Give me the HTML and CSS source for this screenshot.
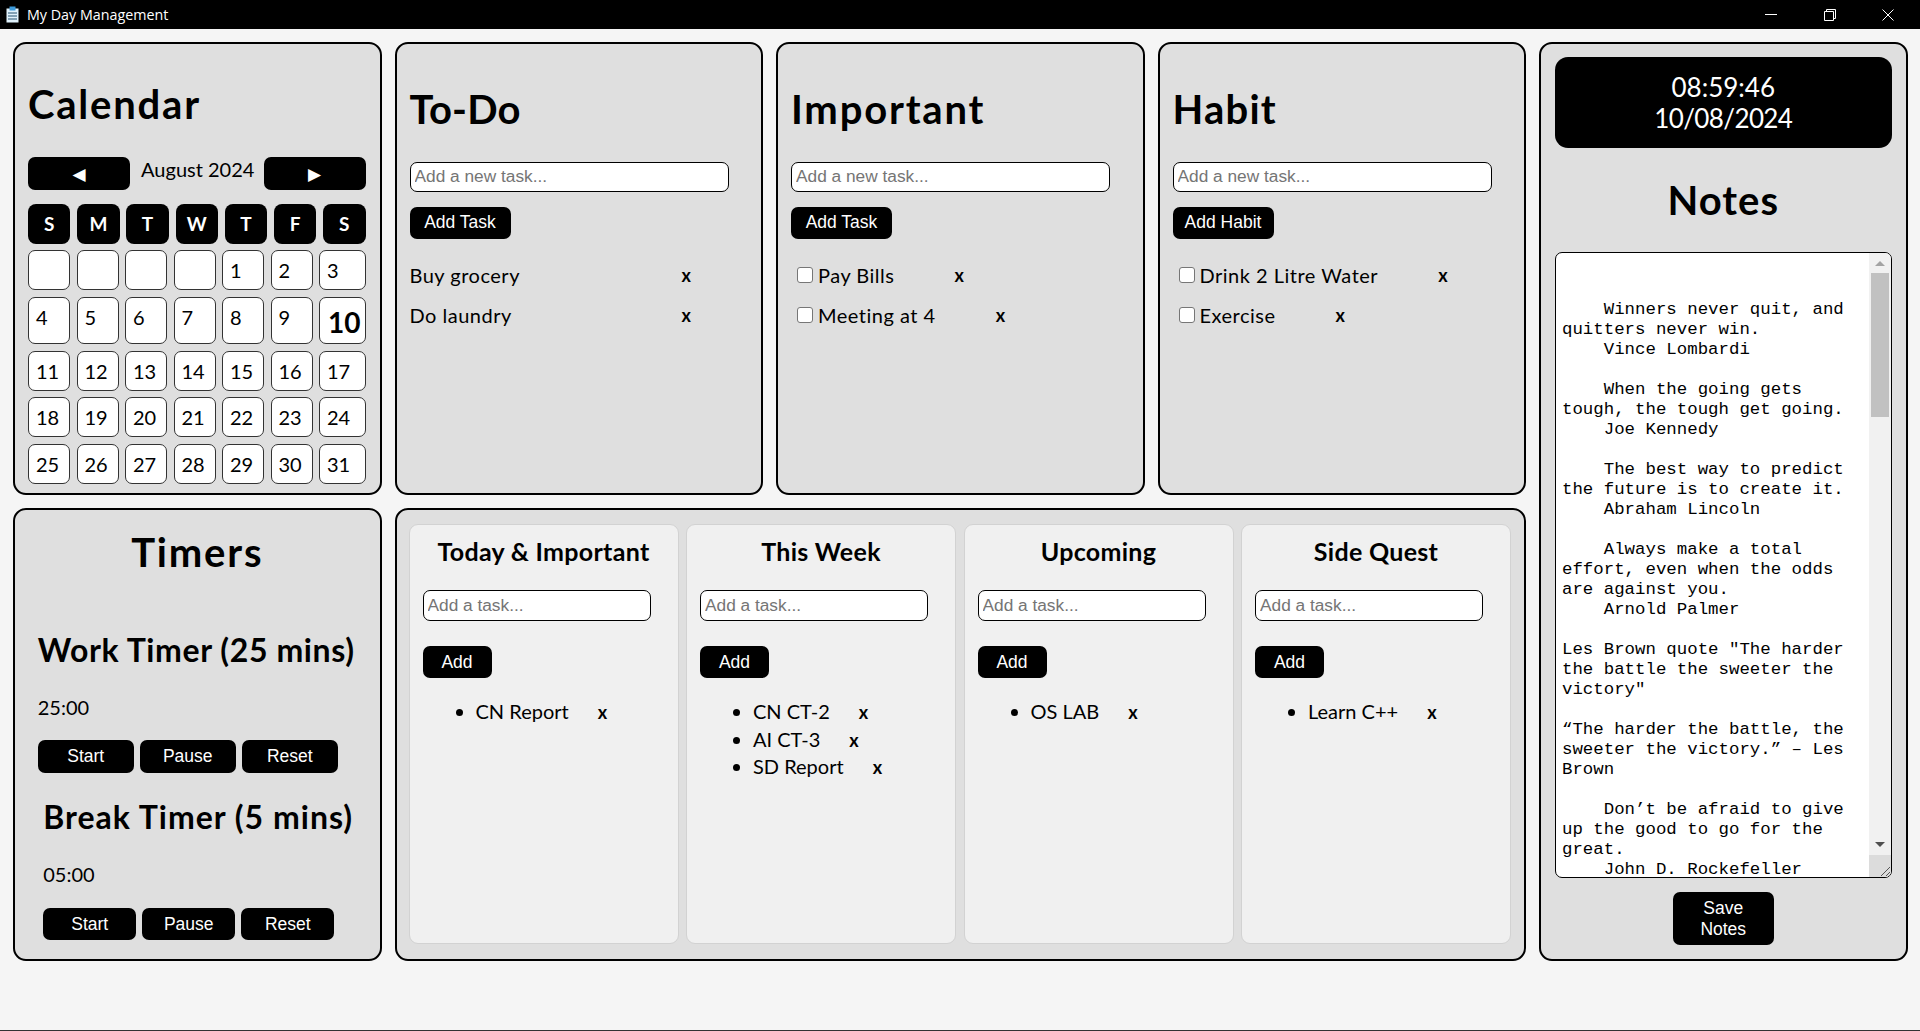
FILE: index.html
```html
<!DOCTYPE html>
<html lang="en">
<head>
<meta charset="utf-8">
<title>My Day Management</title>
<link rel="stylesheet" href="styles.css">
</head>
<body>
<div class="page">
  <header class="titlebar">
    <svg class="app-icon" width="13" height="17" viewBox="0 0 13 17"><rect x="0.5" y="2.5" width="12" height="14" fill="#dff1fb"/><rect x="3.5" y="0.5" width="6" height="4" fill="#3d9bdc"/><path d="M2 7h9M2 10h9M2 13h9" stroke="#24506e" stroke-width="1"/></svg>
    <span class="app-name">My Day Management</span>
    <div class="win-controls">
      <svg width="12" height="12" viewBox="0 0 12 12"><path d="M0 5.5h12" stroke="#fff"/></svg>
      <svg width="12" height="12" viewBox="0 0 12 12"><path d="M0.5 2.5h9v9h-9zM2.5 2.5v-2h9v9h-2" fill="none" stroke="#fff"/></svg>
      <svg width="12" height="12" viewBox="0 0 12 12"><path d="M0.5 0.5l11 11M11.5 0.5l-11 11" fill="none" stroke="#fff"/></svg>
    </div>
  </header>

  <main class="board">
    <section class="card calendar">
      <h1 class="title">Calendar</h1>
      <div class="cal-nav">
        <button class="btn cal-arrow">◀</button>
        <span class="cal-month">August 2024</span>
        <button class="btn cal-arrow">▶</button>
      </div>
      <div class="cal-head">
        <span>S</span><span>M</span><span>T</span><span>W</span><span>T</span><span>F</span><span>S</span>
      </div>
      <div class="cal-days">
        <span class="day"></span><span class="day"></span><span class="day"></span><span class="day"></span><span class="day">1</span><span class="day">2</span><span class="day">3</span>
        <span class="day">4</span><span class="day">5</span><span class="day">6</span><span class="day">7</span><span class="day">8</span><span class="day">9</span><span class="day today">10</span>
        <span class="day">11</span><span class="day">12</span><span class="day">13</span><span class="day">14</span><span class="day">15</span><span class="day">16</span><span class="day">17</span>
        <span class="day">18</span><span class="day">19</span><span class="day">20</span><span class="day">21</span><span class="day">22</span><span class="day">23</span><span class="day">24</span>
        <span class="day">25</span><span class="day">26</span><span class="day">27</span><span class="day">28</span><span class="day">29</span><span class="day">30</span><span class="day">31</span>
      </div>
    </section>

    <section class="card list-card">
      <h1 class="title list-title todo-title">To-Do</h1>
      <input class="field" placeholder="Add a new task...">
      <button class="btn add-btn">Add Task</button>
      <ul class="tasks wide">
        <li><span class="task-text">Buy grocery</span><span class="del">x</span></li>
        <li><span class="task-text">Do laundry</span><span class="del">x</span></li>
      </ul>
    </section>

    <section class="card list-card">
      <h1 class="title list-title">Important</h1>
      <input class="field" placeholder="Add a new task...">
      <button class="btn add-btn">Add Task</button>
      <ul class="tasks">
        <li><input type="checkbox" class="check"><span>Pay Bills</span><span class="del">x</span></li>
        <li><input type="checkbox" class="check"><span>Meeting at 4</span><span class="del">x</span></li>
      </ul>
    </section>

    <section class="card list-card">
      <h1 class="title list-title habit-title">Habit</h1>
      <input class="field" placeholder="Add a new task...">
      <button class="btn add-btn">Add Habit</button>
      <ul class="tasks">
        <li><input type="checkbox" class="check"><span>Drink 2 Litre Water</span><span class="del">x</span></li>
        <li><input type="checkbox" class="check"><span>Exercise</span><span class="del">x</span></li>
      </ul>
    </section>

    <aside class="card notes">
      <div class="clock">08:59:46<br><span class="clock-date">10/08/2024</span></div>
      <h1 class="title notes-title">Notes</h1>
      <div class="notes-box">
        <div class="notes-text">

    Winners never quit, and quitters never win.
    Vince Lombardi

    When the going gets tough, the tough get going.
    Joe Kennedy

    The best way to predict the future is to create it.
    Abraham Lincoln

    Always make a total effort, even when the odds are against you.
    Arnold Palmer

Les Brown quote "The harder the battle the sweeter the victory"

“The harder the battle, the sweeter the victory.” – Les Brown

    Don’t be afraid to give up the good to go for the great.
    John D. Rockefeller</div>
        <div class="scrollbar">
          <span class="arrow-up"></span>
          <span class="thumb"></span>
          <span class="track"></span>
          <span class="arrow-down"></span>
          <span class="corner"><svg width="11" height="11" viewBox="0 0 11 11"><path d="M1 10L10 1M6 10l4-4" stroke="#555" fill="none"/></svg></span>
        </div>
      </div>
      <button class="btn save-btn">Save Notes</button>
    </aside>

    <section class="card timers">
      <h1 class="title timers-title">Timers</h1>
      <div class="timer work">
        <h2>Work Timer (25 mins)</h2>
        <p>25:00</p>
        <div class="timer-btns"><button class="btn">Start</button><button class="btn">Pause</button><button class="btn">Reset</button></div>
      </div>
      <div class="timer break">
        <h2>Break Timer (5 mins)</h2>
        <p>05:00</p>
        <div class="timer-btns"><button class="btn">Start</button><button class="btn">Pause</button><button class="btn">Reset</button></div>
      </div>
    </section>

    <section class="card planner">
      <div class="plan-col">
        <h3>Today &amp; Important</h3>
        <input class="field plan-field" placeholder="Add a task...">
        <button class="btn plan-add">Add</button>
        <ul class="plan-list"><li>CN Report<span class="del">x</span></li></ul>
      </div>
      <div class="plan-col">
        <h3>This Week</h3>
        <input class="field plan-field" placeholder="Add a task...">
        <button class="btn plan-add">Add</button>
        <ul class="plan-list"><li>CN CT-2<span class="del">x</span></li><li>AI CT-3<span class="del">x</span></li><li>SD Report<span class="del">x</span></li></ul>
      </div>
      <div class="plan-col">
        <h3>Upcoming</h3>
        <input class="field plan-field" placeholder="Add a task...">
        <button class="btn plan-add">Add</button>
        <ul class="plan-list"><li>OS LAB<span class="del">x</span></li></ul>
      </div>
      <div class="plan-col">
        <h3>Side Quest</h3>
        <input class="field plan-field" placeholder="Add a task...">
        <button class="btn plan-add">Add</button>
        <ul class="plan-list"><li>Learn C++<span class="del">x</span></li></ul>
      </div>
    </section>
  </main>
</div>
</body>
</html>
```

FILE: styles.css
```css
* { box-sizing: border-box; }
html, body { margin: 0; padding: 0; }
body { background: #f5f5f5; color: #000; font-family: "Lato", "Noto Sans", sans-serif; overflow: hidden; }
.page { height: 1031px; border-bottom: 1px solid #333; }

.titlebar { height: 29px; background: #000; color: #fff; display: flex; align-items: center; padding-left: 6px; }
.app-icon { margin-right: 8px; flex: none; }
.app-name { font: 14.3px "Open Sans", sans-serif; }
.win-controls { margin-left: auto; display: flex; gap: 46.5px; padding-right: 26px; }
.win-controls svg { display: block; }

.board { display: grid; grid-template-columns: repeat(5, 368.5px); grid-template-rows: 453px 453px; gap: 13px; padding: 13px 0 0 13px; }
.card { background: #dfdfdf; border: 2px solid #000; border-radius: 13px; }

.title { margin: 0; font-size: 40px; line-height: 48px; font-weight: 700; letter-spacing: 1.8px; }
.btn { background: #000; color: #fff; border: 0; border-radius: 7px; font: 17.5px "Liberation Sans", sans-serif; padding: 0; }
.field { display: block; background: #fff; border: 1.5px solid #000; border-radius: 7px; font: 17.3px "Liberation Sans", sans-serif; padding: 0 4px 2px; outline: 0; }
.field::placeholder { color: #757575; }

/* calendar */
.calendar { padding: 36px 14px 0 13px; }
.cal-nav { display: flex; justify-content: space-between; align-items: center; margin-top: 29px; }
.cal-arrow { width: 102px; height: 33px; font: 17px "DejaVu Sans", sans-serif; }
.cal-month { font-size: 20px; line-height: 33px; position: relative; top: -4px; left: 1px; }
.cal-head { display: grid; grid-template-columns: repeat(7, 1fr); column-gap: 6.8px; margin-top: 14px; }
.cal-head span { background: #000; color: #fff; height: 40px; line-height: 39px; border-radius: 8px; text-align: center; font-size: 19px; font-weight: 700; }
.cal-days { display: grid; grid-template-columns: repeat(6, 42px) 47px; gap: 6.75px 6.5px; margin-top: 6px; }
.day { background: #fff; border: 1px solid #333; border-radius: 7px; min-height: 40px; padding: 6px 0 0 7px; font-size: 20px; line-height: 26px; }
.today { min-height: 47px; padding: 8px 0 0 8px; font-size: 28px; line-height: 32px; font-weight: 700; }

/* lists */
.list-card { padding: 36px 13px 0; }
.list-title { margin-top: 5px; }
.todo-title { letter-spacing: 0.2px; }
.habit-title { letter-spacing: 1.2px; }
.field { width: 319px; height: 30px; margin-top: 29px; }
.add-btn { display: block; width: 101px; height: 32px; margin-top: 15px; padding-bottom: 2px; }
.tasks { list-style: none; margin: 16px 0 0; padding: 0; font-size: 20px; letter-spacing: 0.5px; }
.tasks li { display: flex; align-items: center; height: 40px; }
.tasks.wide li { width: 282px; justify-content: space-between; }
.check { appearance: none; width: 16px; height: 16px; margin: 0 5px 0 6px; background: #fff; border: 1px solid #767676; border-radius: 3px; }
.tasks li > .check ~ .del { margin-left: 60px; }
.del { font-weight: 700; font-size: 18px; }

/* notes */
.notes { grid-column: 5; grid-row: 1 / 3; padding: 13px 14px 0 14px; display: flex; flex-direction: column; }
.clock { background: #000; color: #fff; height: 91px; border-radius: 13px; text-align: center; font-size: 26px; line-height: 31px; padding-top: 15px; flex: none; }
.clock-date { letter-spacing: -0.6px; }
.notes-title { text-align: center; margin-top: 28px; letter-spacing: 1px; }
.notes-box { display: flex; margin-top: 28px; height: 626px; background: #fff; border: 1.5px solid #000; border-radius: 7px; overflow: hidden; flex: none; }
.notes-text { flex: 1; padding: 7px 0 0 6px; font: 17.4px/20px "Liberation Mono", monospace; white-space: pre-wrap; overflow: hidden; }
.scrollbar { width: 22px; flex: none; background: #f1f1f1; display: flex; flex-direction: column; align-items: center; }
.arrow-up { width: 0; height: 0; margin-top: 8px; border: 5px solid transparent; border-top: 0; border-bottom: 5px solid #a3a3a3; }
.thumb { width: 18px; height: 144px; background: #c1c1c1; margin-top: 7px; flex: none; }
.track { flex: 1; }
.arrow-down { width: 0; height: 0; margin-bottom: 8px; border: 5px solid transparent; border-bottom: 0; border-top: 5px solid #505050; }
.corner { width: 22px; height: 22px; background: #dcdcdc; display: flex; align-items: flex-end; justify-content: flex-end; flex: none; }
.corner svg { display: block; }
.save-btn { display: block; align-self: center; width: 101px; height: 53px; margin-top: 14px; line-height: 21px; padding: 0 15px; }

/* timers */
.timers { padding: 18px 0 0; display: flex; flex-direction: column; align-items: center; }
.timers-title { text-align: center; }
.timer { margin-top: 55px; margin-right: 1px; }
.timer h2 { margin: 0; font-size: 32px; line-height: 38px; font-weight: 700; white-space: nowrap; letter-spacing: 0.6px; }
.timer p { margin: 26px 0 0; font-size: 20px; line-height: 24px; }
.timer-btns { display: flex; gap: 6px; margin-top: 21px; }
.work { width: 318px; }
.work .btn { width: 96px; height: 33px; }
.break { width: 307px; margin-top: 25px; }
.break h2 { letter-spacing: 1px; }
.break .btn { width: 93px; height: 32px; }
.break .timer-btns { margin-top: 22px; }

/* planner */
.planner { grid-column: 2 / 5; grid-row: 2; display: grid; grid-template-columns: repeat(4, 1fr); gap: 7.5px; padding: 14px 13px 15px 12px; }
.plan-col { background: #f0f0f0; border: 1px solid #d2d2d2; border-radius: 9px; padding: 11px 13px 0; }
.plan-col h3 { margin: 0; text-align: center; font-size: 25px; line-height: 30px; font-weight: 700; letter-spacing: 0.3px; }
.plan-field { width: 228px; height: 31px; margin-top: 24px; padding-bottom: 0; }
.plan-add { display: block; width: 69px; height: 32px; margin-top: 25px; }
.plan-list { margin: 20px 0 0; padding: 0 0 0 53px; font-size: 20px; }
.plan-list li { line-height: 26.7px; }
.plan-list .del { margin-left: 29px; }
```
